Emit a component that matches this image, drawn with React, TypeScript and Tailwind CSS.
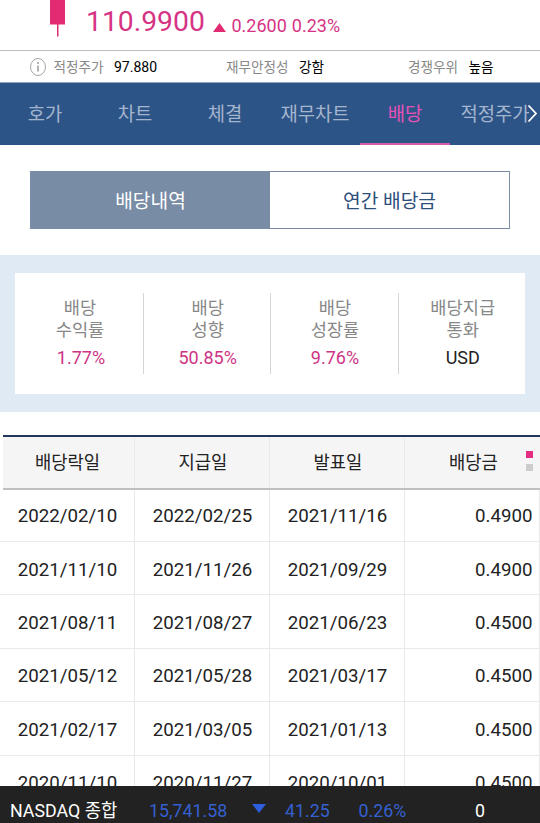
import React from 'react';

const tabs = ['호가', '차트', '체결', '재무차트', '배당', '적정주가'];

const stats = [
  { label: ['배당', '수익률'], value: '1.77%' },
  { label: ['배당', '성향'], value: '50.85%' },
  { label: ['배당', '성장률'], value: '9.76%' },
  { label: ['배당지급', '통화'], value: 'USD' },
];

const dividends = [
  ['2022/02/10', '2022/02/25', '2021/11/16', '0.4900'],
  ['2021/11/10', '2021/11/26', '2021/09/29', '0.4900'],
  ['2021/08/11', '2021/08/27', '2021/06/23', '0.4500'],
  ['2021/05/12', '2021/05/28', '2021/03/17', '0.4500'],
  ['2021/02/17', '2021/03/05', '2021/01/13', '0.4500'],
  ['2020/11/10', '2020/11/27', '2020/10/01', '0.4500'],
];

const PriceHeader: React.FC = () => (
  <div className="flex h-[51px] shrink-0 border-b border-[#bdbdbd] text-[#d63384]">
    <svg className="ml-[50px] h-[37px] w-[15px]" viewBox="0 0 15 37">
      <rect width="15" height="24.5" fill="#e32b74" />
      <rect x="7" y="24" width="1.5" height="12.5" fill="#e32b74" />
    </svg>
    <span className="ml-[21px] mt-[5px] w-[127px] text-[28.3px] leading-[33px]">110.9900</span>
    <svg className="mt-[23px] h-[9px] w-[13px]" viewBox="0 0 13 9">
      <path d="M6.5 0 13 9H0z" fill="#e32b74" />
    </svg>
    <span className="ml-[5.5px] mt-[15px] text-[18px] leading-[21px]">0.2600</span>
    <span className="ml-[5px] mt-[15px] text-[18px] leading-[21px]">0.23%</span>
  </div>
);

const SummaryBar: React.FC = () => (
  <div className="flex h-[31px] shrink-0 items-center text-[13.6px] leading-[20px] text-[#888]">
    <svg className="ml-[30px] h-[18px] w-[16px]" viewBox="0 0 16 18" fill="none" stroke="#a6a6a6">
      <ellipse cx="8" cy="9" rx="7.5" ry="8.5" />
      <path d="M8 7.5v6M8 4v2" strokeWidth="1.7" />
    </svg>
    <span className="ml-[7.5px] w-[60.5px]">적정주가</span>
    <span className="w-[112px] text-[14px] text-black">97.880</span>
    <span className="w-[73px]">재무안정성</span>
    <span className="w-[109px] text-black">강함</span>
    <span className="w-[60.5px]">경쟁우위</span>
    <span className="text-black">높음</span>
  </div>
);

const TabBar: React.FC = () => (
  <div className="flex h-[63px] shrink-0 border-t border-[#8ea4c0] bg-[#2d5486]">
    {tabs.map((tab) => (
      <div
        key={tab}
        className={
          tab === '배당'
            ? 'flex w-[90px] justify-center border-b-2 border-[#d35aae] pt-[18px] text-[18.8px] leading-[28px] text-[#e551b8]'
            : 'flex w-[90px] justify-center pt-[18px] text-[18.8px] leading-[28px] text-[#a5b5cf]'
        }
      >
        {tab}
      </div>
    ))}
    <svg className="-ml-[13px] mt-[21px] h-[20px] w-[11px] shrink-0" viewBox="0 0 11 20" fill="none" stroke="#fff" strokeWidth="1.8">
      <path d="M1.5 1.5 9 9.5l-7.5 8" />
    </svg>
  </div>
);

const StatCards: React.FC = () => (
  <div className="mt-[26px] shrink-0 bg-[#e0eaf4] px-[15px] pb-[18px] pt-[18px]">
    <div className="flex h-[121px] bg-white pt-[20px]">
      {stats.map((stat, i) => (
        <div
          key={stat.label.join('')}
          className={`flex h-[81px] shrink-0 flex-col items-center pt-[4px] ${i < 3 ? 'border-r border-[#d5d5d5]' : ''} ${i === 0 ? 'w-[129px] pl-[2px]' : 'w-[127.3px] pl-[1px]'}`}
        >
          <span className="text-[17.6px] leading-[22px] text-[#888]">{stat.label[0]}</span>
          <span className="text-[17.6px] leading-[22px] text-[#888]">{stat.label[1]}</span>
          <span
            className={`mt-[6px] text-[18px] leading-[22px] ${stat.value === 'USD' ? 'text-[#222]' : 'text-[#ce3484]'} ${i === 0 ? 'ml-[2px]' : ''}`}
          >
            {stat.value}
          </span>
        </div>
      ))}
    </div>
  </div>
);

const DividendTable: React.FC = () => (
  <div className="mt-[23px] flex min-h-0 flex-1 flex-col overflow-hidden">
    <div className="ml-[3px] flex h-[55px] shrink-0 border-b-2 border-t-2 border-b-[#c0c0c0] border-t-[#20395a] bg-[#f5f5f5] text-[17.7px] leading-[26px] text-[#222]">
      <div className="w-[132px] border-r border-[#e9e9e9] pr-[2px] pt-[13px] text-center">배당락일</div>
      <div className="w-[135px] border-r border-[#e9e9e9] pl-[2px] pt-[13px] text-center">지급일</div>
      <div className="w-[135px] border-r border-[#e9e9e9] pl-[2px] pt-[13px] text-center">발표일</div>
      <div className="flex w-[135px] pl-[44px] pt-[13px]">
        <span className="w-[77px]">배당금</span>
        <div className="mt-[1px] flex flex-col gap-[6px]">
          <span className="h-[7px] w-[7px] bg-[#e22d80]" />
          <span className="h-[7px] w-[7px] bg-[#ccc]" />
        </div>
      </div>
    </div>
    {dividends.map((row, i) => (
      <div
        key={row[0]}
        className={`flex shrink-0 border-b border-[#e9e9e9] text-[18.7px] leading-[22px] text-[#222] ${i === 0 ? 'h-[52px] pt-0' : 'h-[53.4px]'}`}
      >
        {row.slice(0, 3).map((date) => (
          <div
            key={date}
            className={`w-[135px] shrink-0 border-r border-[#e9e9e9] pl-[1px] text-center ${i === 0 ? 'pt-[15px]' : 'pt-[16.5px]'}`}
          >
            {date}
          </div>
        ))}
        <div className={`w-[135px] border-r border-[#e9e9e9] pr-[6.5px] text-right ${i === 0 ? 'pt-[15px]' : 'pt-[16.5px]'}`}>
          {row[3]}
        </div>
      </div>
    ))}
  </div>
);

const IndexTicker: React.FC = () => (
  <div className="flex h-[37px] shrink-0 overflow-hidden bg-[#222] pt-[13px] text-[17.8px] leading-[24px] text-[#3560cf]">
    <span className="ml-[10px] w-[139px] text-white">NASDAQ 종합</span>
    <span className="w-[103px]">15,741.58</span>
    <svg className="mt-[5px] h-[9px] w-[14px]" viewBox="0 0 14 9">
      <path d="M0 0h14L7 9z" fill="#2f5edc" />
    </svg>
    <span className="ml-[19px] w-[73.5px]">41.25</span>
    <span className="w-[116.5px]">0.26%</span>
    <span className="text-white">0</span>
  </div>
);

export default function App() {
  return (
    <div className="flex h-[823px] w-[540px] flex-col overflow-hidden whitespace-nowrap bg-white font-[Roboto,'Noto_Sans_CJK_KR',sans-serif]">
      <PriceHeader />
      <SummaryBar />
      <TabBar />
      <div className="mx-[30px] mt-[26px] flex h-[58px] shrink-0 border border-[#788ca5] text-[19.2px] leading-[28px]">
        <button className="w-[239px] bg-[#788ca5] pt-[3px] text-white">배당내역</button>
        <button className="flex-1 pt-[3px] text-[#2d4f7c]">연간 배당금</button>
      </div>
      <StatCards />
      <DividendTable />
      <IndexTicker />
    </div>
  );
}
